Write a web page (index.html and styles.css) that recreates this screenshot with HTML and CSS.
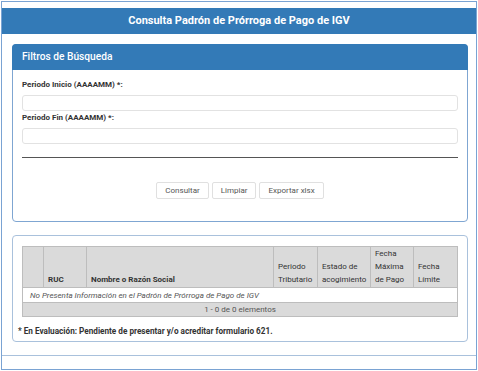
FILE: index.html
```html
<!DOCTYPE html>
<html lang="es">
<head>
  <meta charset="UTF-8">
  <meta name="viewport" content="width=device-width, initial-scale=1.0">
  <title>Consulta Padrón de Prórroga de Pago de IGV</title>
  <link rel="stylesheet" href="styles.css">
</head>
<body>

  <div class="page">
    <div class="title-bar">Consulta Padrón de Prórroga de Pago de IGV</div>

    <!-- Filtros -->
    <div class="panel panel-primary">
      <div class="panel-heading">Filtros de Búsqueda</div>
      <div class="panel-body">
        <label>Periodo Inicio (AAAAMM) *:</label>
        <input type="text" name="periodoInicio">

        <label>Periodo Fin (AAAAMM) *:</label>
        <input type="text" name="periodoFin">

        <hr>

        <div class="actions">
          <button type="button">Consultar</button>
          <button type="button">Limpiar</button>
          <button type="button">Exportar xlsx</button>
        </div>
      </div>
    </div>

    <!-- Resultados -->
    <div class="panel panel-result">
      <table class="grid">
        <colgroup>
          <col class="w-check">
          <col class="w-ruc">
          <col>
          <col class="w-periodo">
          <col class="w-estado">
          <col class="w-fecha">
          <col class="w-limite">
        </colgroup>
        <thead>
          <tr>
            <th></th>
            <th class="strong">RUC</th>
            <th class="strong">Nombre o Razón Social</th>
            <th>Periodo Tributario</th>
            <th>Estado de acogimiento</th>
            <th>Fecha Máxima de Pago</th>
            <th>Fecha Límite</th>
          </tr>
        </thead>
        <tbody>
          <tr class="empty-row">
            <td colspan="7">No Presenta Información en el Padrón de Prórroga de Pago de IGV</td>
          </tr>
          <tr class="pager-row">
            <td colspan="7">1 - 0 de 0 elementos</td>
          </tr>
        </tbody>
      </table>
      <p class="note">* En Evaluación: Pendiente de presentar y/o acreditar formulario 621.</p>
    </div>

    <div class="footer-line"></div>
  </div>

</body>
</html>
```

FILE: styles.css
```css
body {
  margin: 0;
  padding: 1px;
  font-family: Roboto, "Liberation Sans", sans-serif;
  background-color: white;
  color: #333;
}

.page {
  height: 369px;
  width: 476px;
  border: 1px solid #7aa3d3;
  box-sizing: border-box;
  padding-top: 6px;
}

.title-bar {
  background-color: #337ab7;
  color: white;
  font-weight: bold;
  font-size: 11px;
  text-align: center;
  height: 26px;
  line-height: 26px;
}

.panel {
  margin: 10px 8px 0 10px;
  border: 1px solid #7fa6d2;
  border-radius: 4px;
  background-color: white;
}

.panel-heading {
  background-color: #337ab7;
  color: white;
  font-size: 10.2px;
  font-weight: 500;
  height: 26px;
  line-height: 26px;
  padding-left: 10px;
  margin: -1px -1px 0;
  border-radius: 4px 4px 0 0;
}

.panel-body {
  padding: 9px 9px 22px;
}

label {
  display: block;
  font-size: 8px;
  font-weight: bold;
  color: #333;
  line-height: 11px;
}

input {
  display: block;
  width: 100%;
  height: 16px;
  margin: 5px 0 1px;
  box-sizing: border-box;
  border: 1px solid #e2e2e2;
  border-radius: 3px;
  font-family: inherit;
}

hr {
  margin: 13px 0 24px;
  border: 0;
  border-top: 1px solid #555;
}

.actions {
  display: flex;
  justify-content: center;
  gap: 3px;
}

button {
  font-family: inherit;
  font-size: 8px;
  color: #555;
  background-color: white;
  border: 1px solid #e0e0e0;
  border-radius: 2px;
  height: 17px;
  padding: 0 8px;
}

.panel-result {
  margin-top: 13px;
  border-color: #a9c1dc;
  padding: 10px 9px 4px;
}

.grid {
  width: 436px;
  table-layout: fixed;
  border-collapse: collapse;
  font-size: 8px;
  border: 1px solid #bdbdbd;
}

.w-check { width: 21px; }
.w-ruc { width: 43px; }
.w-periodo { width: 44px; }
.w-estado { width: 53px; }
.w-fecha { width: 43px; }
.w-limite { width: 44px; }

.grid th {
  background-color: #dadada;
  font-weight: normal;
  text-align: left;
  vertical-align: bottom;
  padding: 0 3px 1px 4px;
  line-height: 13px;
  border-left: 1px solid #bdbdbd;
  height: 38px;
  box-sizing: border-box;
}

.grid th.strong {
  font-weight: bold;
}

.empty-row td {
  font-style: italic;
  color: #555;
  padding: 0 7px;
  height: 14px;
  border-top: 1px solid #bdbdbd;
}

.pager-row td {
  background-color: #dadada;
  text-align: center;
  color: #555;
  height: 13px;
  padding: 0;
  border-top: 1px solid #bdbdbd;
}

.note {
  margin: 9px 0 0 -4px;
  font-size: 8.2px;
  line-height: 11px;
  font-weight: bold;
  color: #333;
}

.footer-line {
  margin-top: 13px;
  border-top: 1px solid #a9c1dc;
}
```
